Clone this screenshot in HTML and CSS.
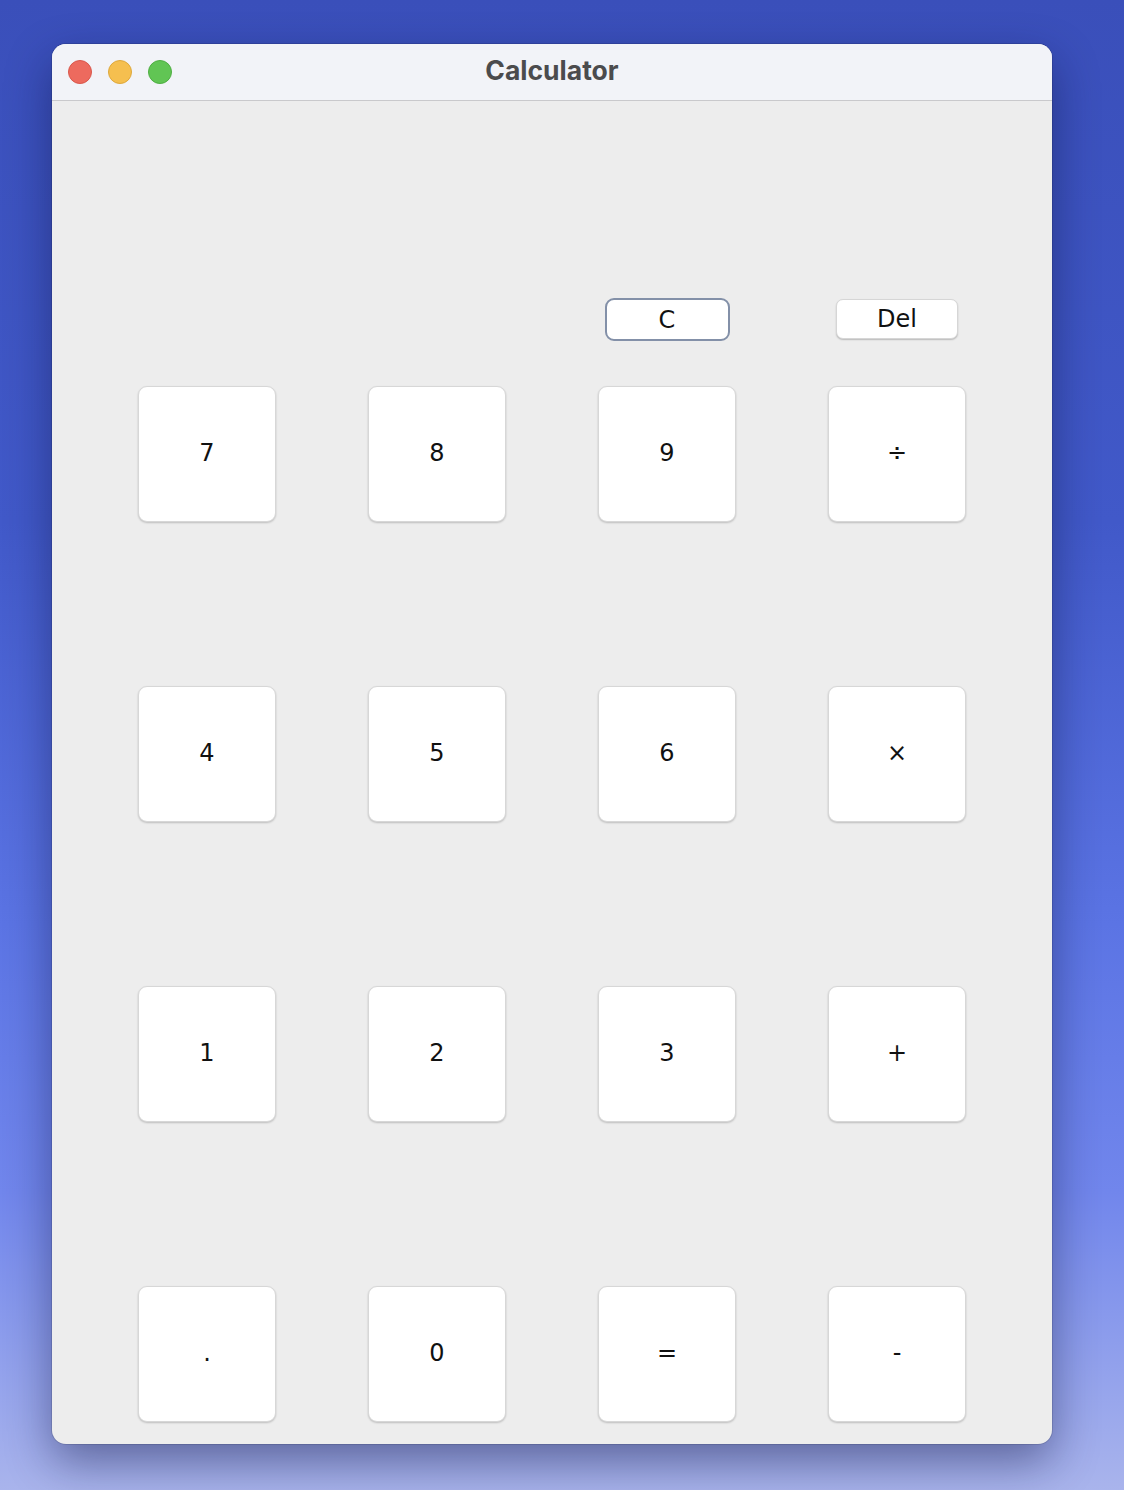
FILE: index.html
```html
<!DOCTYPE html>
<html>
<head>
<meta charset="utf-8">
<title>Calculator</title>
<link rel="stylesheet" href="styles.css">
</head>
<body>
<div class="window">
  <div class="titlebar">
    <div class="lights">
      <span class="light red"></span>
      <span class="light yellow"></span>
      <span class="light green"></span>
    </div>
    <div class="title">Calculator</div>
  </div>
  <div class="content">
    <div class="controls">
      <div class="cell"></div>
      <div class="cell"></div>
      <div class="cell"><button class="ctl focused">C</button></div>
      <div class="cell"><button class="ctl">Del</button></div>
    </div>
    <div class="keys">
      <button class="key">7</button>
      <button class="key">8</button>
      <button class="key">9</button>
      <button class="key op">÷</button>
      <button class="key">4</button>
      <button class="key">5</button>
      <button class="key">6</button>
      <button class="key op">×</button>
      <button class="key">1</button>
      <button class="key">2</button>
      <button class="key">3</button>
      <button class="key op">+</button>
      <button class="key">.</button>
      <button class="key">0</button>
      <button class="key op">=</button>
      <button class="key op minus">-</button>
    </div>
  </div>
</div>
</body>
</html>
```

FILE: styles.css
```css
html, body {
  margin: 0;
  padding: 0;
}
body {
  width: 1124px;
  height: 1490px;
  box-sizing: border-box;
  padding: 44px 72px 0 52px;
  background: linear-gradient(to bottom, #3a4fba 0%, #4159c9 35%, #5b74e4 62%, #7186ec 80%, #a9b4ec 100%);
  font-family: "Open Sans", "DejaVu Sans", sans-serif;
  overflow: hidden;
}
.window {
  width: 1000px;
  height: 1400px;
  border-radius: 14px;
  overflow: hidden;
  background: #ededed;
  box-shadow: 0 18px 46px rgba(10, 15, 60, 0.45), 0 0 0 1px rgba(0, 0, 0, 0.12);
  display: flex;
  flex-direction: column;
}
.titlebar {
  height: 56px;
  flex: none;
  background: #f2f3f8;
  border-bottom: 1px solid #c9c9cc;
  position: relative;
  display: flex;
  align-items: center;
  justify-content: center;
}
.lights {
  position: absolute;
  left: 16px;
  top: 16px;
  display: flex;
  gap: 16px;
}
.light {
  width: 24px;
  height: 24px;
  border-radius: 50%;
  box-sizing: border-box;
}
.red { background: #ed6a5e; border: 1px solid #d9574c; }
.yellow { background: #f5bf4f; border: 1px solid #dea83c; }
.green { background: #61c554; border: 1px solid #4fae43; }
.title {
  font-family: "Inter", "Liberation Sans", sans-serif;
  font-weight: 700;
  font-size: 26.5px;
  color: #4b4b4d;
  margin-top: -4px;
}
.content {
  flex: 1;
  padding: 197px 86px 0 86px;
}
.controls, .keys {
  display: grid;
  grid-template-columns: repeat(4, 138px);
  column-gap: 92px;
}
.controls .cell {
  display: flex;
  justify-content: center;
  height: 44px;
}
.ctl {
  width: 122px;
  height: 40px;
  margin-top: 1px;
  background: #fff;
  border: 1px solid #d6d6d6;
  border-radius: 7px;
  box-shadow: 0 1px 1.5px rgba(0, 0, 0, 0.22);
  font-family: "DejaVu Sans", "Open Sans", sans-serif;
  font-size: 24px;
  color: #111;
  padding: 0;
}
.ctl.focused {
  width: 125px;
  height: 43px;
  margin-top: 0;
  border: 2.5px solid #8390a8;
  border-radius: 9px;
  box-shadow: none;
}
.keys {
  margin-top: 44px;
  row-gap: 164px;
}
.key {
  width: 138px;
  height: 136px;
  background: #fff;
  border: 1px solid #d7d7d7;
  border-radius: 9px;
  box-shadow: 0 1px 2px rgba(0, 0, 0, 0.2);
  font-family: "DejaVu Sans", "Open Sans", sans-serif;
  font-size: 24px;
  color: #111;
  padding: 0 0 3px 0;
}
.key.minus {
  font-family: "Liberation Sans", "DejaVu Sans", sans-serif;
  font-size: 26px;
}
```
